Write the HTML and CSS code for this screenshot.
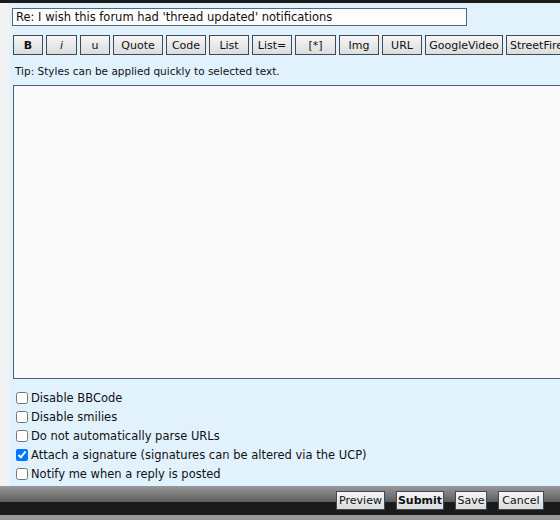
FILE: index.html
```html
<!DOCTYPE html>
<html>

<head>
    <meta charset="utf-8" />
    <title>Post a reply</title>
    <link rel="stylesheet" href="styles.css">
</head>

<body>
    <div class="topbar"></div>
    <div class="page">
        <div class="gutter"></div>
        <div class="panel">
            <input class="subject" type="text" value="Re: I wish this forum had 'thread updated' notifications">
            <div class="bbcode">
                <button class="bb bold w30">B</button>
                <button class="bb italic w31">i</button>
                <button class="bb w30">u</button>
                <button class="bb w50">Quote</button>
                <button class="bb w40">Code</button>
                <button class="bb w40">List</button>
                <button class="bb w40">List=</button>
                <button class="bb w41">[*]</button>
                <button class="bb w40">Img</button>
                <button class="bb w40">URL</button>
                <button class="bb w78">GoogleVideo</button>
                <button class="bb w70 cut">StreetFire</button>
            </div>
            <div class="tip">Tip: Styles can be applied quickly to selected text.</div>
            <textarea class="message"></textarea>
            <div class="options">
                <label><input type="checkbox">Disable BBCode</label>
                <label><input type="checkbox">Disable smilies</label>
                <label><input type="checkbox">Do not automatically parse URLs</label>
                <label><input type="checkbox" checked>Attach a signature (signatures can be altered via the UCP)</label>
                <label><input type="checkbox">Notify me when a reply is posted</label>
            </div>
        </div>
    </div>
    <div class="footer">
        <button class="bb act w49">Preview</button>
        <button class="bb act bold w48">Submit</button>
        <button class="bb act w32">Save</button>
        <button class="bb act w46">Cancel</button>
    </div>
</body>

</html>
```
FILE: styles.css
```css
body {
    margin: 0;
    width: 560px;
    height: 520px;
    overflow: hidden;
    background: #999;
    font-family: "DejaVu Sans", sans-serif;
    color: #111;
}

.topbar {
    height: 3px;
    background: #1b1b1b;
}

.page {
    display: flex;
    height: 483px;
}

.gutter {
    width: 9px;
    background: #f3f3f3;
}

.panel {
    flex: 1;
    background: #e1f2fd;
    padding: 5px 0 0 3px;
    min-width: 0;
}

.subject {
    display: block;
    box-sizing: border-box;
    width: 455px;
    height: 18px;
    margin: 0;
    padding: 0 3px;
    border: 1px solid #53667a;
    background: #fdfdfd;
    font: 11.5px "DejaVu Sans", sans-serif;
    color: #111;
}

.bbcode {
    display: flex;
    gap: 3px;
    margin: 9px 0 0 1px;
    white-space: nowrap;
}

.bb {
    box-sizing: border-box;
    height: 20px;
    padding: 0 2px;
    border: 1px solid #3e4b57;
    background: linear-gradient(#f6f6f6, #dcdcdc);
    font: 11px "DejaVu Sans", sans-serif;
    color: #111;
    flex: none;
}

/* last button runs off the panel edge */
.cut {
    text-align: left;
    padding-left: 3px;
}

.bold { font-weight: bold; }
.italic { font-style: italic; }

.w30 { width: 30px; }
.w31 { width: 31px; }
.w32 { width: 32px; }
.w40 { width: 40px; }
.w41 { width: 41px; }
.w46 { width: 46px; }
.w48 { width: 48px; }
.w49 { width: 49px; }
.w50 { width: 50px; }
.w70 { width: 70px; }
.w78 { width: 78px; }

.tip {
    margin: 9px 0 0 3px;
    font-size: 10.5px;
    line-height: 14px;
}

.message {
    display: block;
    box-sizing: border-box;
    width: 600px;
    height: 294px;
    margin: 7px 0 0 1px;
    border: 1px solid #4e6072;
    background: #fafafa;
    resize: none;
}

.options {
    display: flex;
    flex-direction: column;
    margin: 9px 0 0 4px;
    font-size: 11.5px;
}

.options label {
    display: flex;
    align-items: center;
    height: 19px;
}

.options input {
    width: 12px;
    height: 12px;
    margin: 1px 3px 0 0;
}

.footer {
    display: flex;
    justify-content: flex-end;
    gap: 11px;
    height: 34px;
    padding: 5px 16px 0 0;
    box-sizing: border-box;
    background: linear-gradient(#9a9a9a 0, #5c5c5c 16px, #1b1b1b 16px, #1b1b1b 29px, #999 29px);
}

.act {
    height: 19px;
    padding: 0;
}
```
